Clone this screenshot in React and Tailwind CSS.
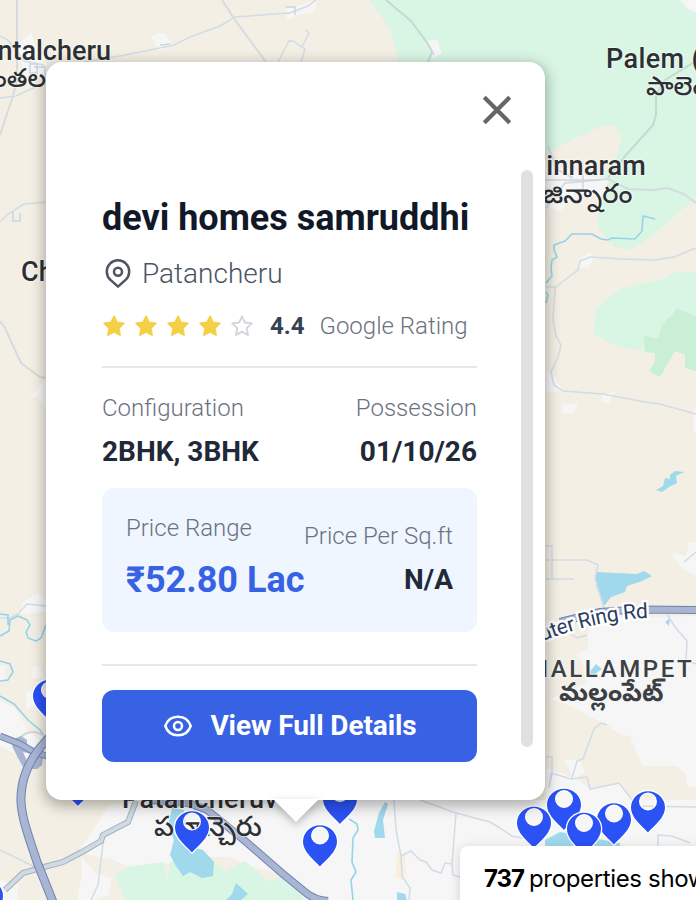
import React from "react";

const pins = [
  [50, 721], [78, 806], [340, 824], [564, 830], [648, 832.5], [614, 844.5],
  [534, 848], [192, 852.5], [584, 854], [320, 866.5], [-14, 921], [708, 884],
];

function Pin({ x, y }) {
  return (
    <path
      transform={`translate(${x} ${y})`}
      d="M0 0C-4-5-17-14-17-25A17 16.2 0 0 1 17-25C17-14 4-5 0 0ZM0-40A9 9 0 1 0 0-22A9 9 0 1 0 0-40Z"
      fill="#2b52f5"
      fillRule="evenodd"
      stroke="#fff"
      strokeWidth="2.6"
      strokeLinejoin="round"
      paintOrder="stroke"
    />
  );
}

function Highway({ d, width = 7 }) {
  return (
    <g fill="none">
      <path d={d} stroke="#7182b0" strokeWidth={width + 1} />
      <path d={d} stroke="#a9b6d3" strokeWidth={width - 1} />
    </g>
  );
}

function MapCanvas() {
  return (
    <svg className="absolute inset-0 h-[900px] w-[696px]" viewBox="0 0 696 900">
      <rect width="696" height="900" fill="#f3efe4" />

      <g fill="#d9f6e4">
        <path d="M369 0L391 30L398 62L410 100L500 160L545 155L572 140L600 127L615 125L622 136L615 163L600 177L598 228L614 246L631 250L650 237L696 198V0Z" />
        <path d="M596 309L620 289L662 279L679 271L696 273V350L648 351L618 347L594 335Z" />
      </g>
      <path d="M644 336L659 339Q659 324 672 315L677 308L696 317V371L685 368V355L675 351L660 377L649 371L655 362V353L645 352Z" fill="#caefd7" />

      <g fill="#f6f6f6">
        <path d="M151 38L157 33L165 33L170 42L170 47L160 50Z" />
        <path d="M286 9L318 0L314 12L297 15L287 21Z" />
        <path d="M17 45L32 32L34 43L46 61L47 80L25 76Z" />
        <path d="M426 41L437 40L442 54L432 58Z" />
        <path d="M680 0H696V12L688 9Z" />
        <path d="M546 165L568 168L595 178L609 178L604 195L573 198L560 212L546 205Z" />
        <path d="M579 261L589 252L593 255V260L588 268H579Z" />
        <path d="M546 372H552L563 391L546 393Z" />
        <path d="M602 395L616 391L608 404L602 402ZM563 405L578 403L574 413L563 413Z" />
        <path d="M30 397L46 379V408L37 397ZM22 603L38 593L46 600V612L20 614Z" />
        <path d="M671 553L686 556L689 542H696V576L682 568Z" />
        <path d="M694 410L696 409V436L693 428Z" />
        <path d="M577 655L588 648L588 622L600 618L696 616V788L687 786L676 765L643 766L638 756L630 735L620 738L608 725L600 722L575 708L551 699L565 692L586 684L582 661Z" />
        <path d="M0 700L15 708L28 730L46 746V758L22 757L0 746ZM33 667L38 666L44 675L44 678L32 678ZM26 693L34 690V706L26 709ZM0 666H6L4 680L0 681Z" />
        <path d="M108 806L136 800H696V900H300L284 875L250 866L230 857L210 857L166 864L160 862L128 867L114 860L96 856L78 852L90 835Z" />
        <path d="M81 856L96 874L112 878L108 896L92 900H77L82 875ZM0 880L18 885L17 900H0Z" />
        <path d="M565 760L585 760L584 777L575 780L569 771Z" />
        <path d="M546 766L573 778L625 783L636 798L696 808V900H546Z" />
      </g>
      <path d="M546 722L551 700L600 722L631 740L643 766L676 765L687 776L685 797L632 800L620 784L589 788L573 776L546 768Z" fill="#f3efe4" />
      <path d="M600 720L612 725L630 735L638 756L643 766H696V690H600Z" fill="#f6f6f6" />
      <path d="M565 760L580 760L585 772L574 780Z" fill="#f6f6f6" />
      <path d="M114 875L128 867L165 862L164 868L167 880L170 862L184 858L210 857L225 872L245 861L270 883L284 890L300 900H126L122 893Z" fill="#d9f6e4" />
      <path d="M284 900L240 866L244 861L252 867L269 882L280 877L300 890L304 900Z" fill="#d9f6e4" />

      <g fill="#a0d8ec">
        <path d="M656 490L663 486L665 478L670 479V475L675 471L684 472L676 476L677 483L669 487L662 492Z" />
        <path d="M596 572L637 574L644 571L652 576L642 581L627 586L625 592L611 597L604 606L596 586Z" />
        <path d="M596 664L602 669L595 674L588 674ZM665 622L670 618L669 626Z" />
        <path d="M172 808L184 810L188 846L203 850L214 862L213 876L202 878L190 872L183 876L176 866L170 855L174 840L168 826Z" />
        <path d="M385 802L388 804L383 820L385 838H375L374 831L379 813ZM397 892L405 894L407 900H397Z" />
        <path d="M545 840L560 832L620 843V850H545ZM236 883L248 894L241 900H226L232 894Z" />
      </g>
      <path d="M397 852L405 855L406 873L402 880L396 877Z" fill="#f8efdc" />

      <g fill="none" stroke="#d6dbe0" strokeWidth="2">
        <path d="M17 0V80L13 96L0 135M222 0L235 20L266 62M0 321L5 328L21 363L40 377L46 378" />
        <path d="M386 0L411 21L428 44L432 52L428 62M696 61L665 80L656 95V115L653 125L626 155L608 178" stroke="#c3dad2" />
        <path d="M548 146L558 170L573 178M546 208L565 183L608 179L628 189L654 190L668 188L684 194L696 203" />
      </g>
      <g fill="none" stroke="#d2dce6" strokeWidth="1.5">
        <path d="M84 62L120 56L150 50L174 45L190 37L220 26L235 17L288 13M278 62L289 41L293 41L305 49L301 62M302 47L309 33L305 30M287 14L308 6L316 0M0 98L16 96L40 85M0 36L8 40L24 61L44 65M0 222L8 214L24 204L46 202" />
        <path d="M546 287L556 287L562 282L578 270L580 261L590 257L620 259L655 260L674 257L696 248M555 288L553 320L556 336L561 345L558 357L551 372L554 385L563 391L603 394L645 402L660 404L696 414" />
        <path d="M546 546H552V578M546 560L587 560L598 565L595 578L604 608M546 579H574M571 634L577 638L587 635M667 614L675 627L687 641L686 660L696 664M684 562L696 552M572 778L577 761L583 759L594 729L601 723L607 725M546 757H552V774L549 788L551 773L571 779L587 777L590 789L619 783L630 797L636 806L696 807" />
        <path d="M394 800L396 830L401 856L402 876L410 888L409 900M420 800L456 813L490 822L500 828M401 856L411 851L420 860L426 862L432 870L441 873L445 863L452 864L456 813M452 864L453 875L460 877M500 828L512 836L522 838M658 848V835L672 836L690 843" />
        <path d="M0 850L35 867M104 835L100 868L98 885L91 900M0 618L10 618L18 614L27 604L46 606" />
      </g>
      <g fill="none" stroke="#c9d6e0" strokeWidth="1.5">
        <path d="M30 64V73H37V64ZM34 67H45V78M13 212V221H20V213M286 7H295V15M160 45L170 44M430 48L434 55M545 180L600 180M583 174V190" />
      </g>
      <g fill="none" stroke="#96d3ea" strokeWidth="1.6">
        <path d="M655 219L643 216L642 231L635 239L612 238L608 240L601 239L592 234L572 234L565 241L554 245V250L557 257L552 260L551 268L552 276L546 283M546 292L548 295L546 303" />
        <path d="M0 614L8 615V625M0 636L9 631L10 620L18 616L27 620L30 625L26 632L28 638L36 641L41 638L46 625M0 661L10 664L13 672L8 680L0 681M0 696L14 704L28 720L40 730L46 739M349 819L357 824L358 830L353 838L352 862L356 872L351 880L353 900" />
      </g>

      <g fill="none">
        <path d="M5 890L23 873L44 867L63 862L82 852L101 841L103 835L128 822L136 801" stroke="#a5b3bf" strokeWidth="6" />
        <path d="M5 890L23 873L44 867L63 862L82 852L101 841L103 835L128 822L136 801" stroke="#cfdae2" strokeWidth="4" />
        <path d="M19 740Q24 731 35 732L46 736" stroke="#d3d6d8" strokeWidth="2" />
      </g>
      <path d="M16 738L21 736L27 740V746L34 752L43 757L42 765L37 769H24L18 758L12 746ZM23 752L27 761L32 754Z" fill="#a9b6d3" fillRule="evenodd" />
      <Highway d="M0 736L20 744L34 752L50 757" width={6} />
      <Highway d="M54 733C33 752 22 773 21 796C20 815 29 837 37 862L53 902" width={8} />
      <Highway d="M150 800L188 803L207 810L217 818L245 841L283 874L305 892Q314 900 328 901" width={7} />
      <Highway d="M560 622L600 612L640 609.5L696 610" width={7} />

      <g fontFamily="Roboto, 'Noto Sans Telugu', sans-serif" fontWeight="500" fontSize="27" fill="#2d3034" stroke="#ffffff" strokeOpacity="0.5" strokeWidth="2" paintOrder="stroke">
        <text x="111" y="60" textAnchor="end">Inntalcheru</text>
        <text x="46" y="87" textAnchor="end" fontSize="25.5">ఇంతల</text>
        <text x="606" y="68" letterSpacing="0.4">Palem (</text>
        <text x="646" y="95" fontSize="26">పాలెం</text>
        <text x="646" y="175" textAnchor="end" letterSpacing="0.15">Jinnaram</text>
        <text x="543" y="203" fontSize="27">జిన్నారం</text>
        <text x="21" y="280.5">Ch</text>
        <text x="122" y="808" letterSpacing="0.4">Patancheruv</text>
        <text x="154" y="836" fontSize="27.5">పటాన్చెరు</text>
      </g>
      <g fontFamily="Roboto, 'Noto Sans Telugu', sans-serif" fill="#3c4043" stroke="#f6f6f6" strokeWidth="2" paintOrder="stroke" fontWeight="500">
        <text x="527" y="677" fontSize="24" letterSpacing="2.6">MALLAMPET</text>
        <text x="559" y="701" fontSize="25.8" fontWeight="700">మల్లంపేట్</text>
      </g>
      <path id="ring-road-label" d="M510 654C540 641 596 619 647.5 618" fill="none" />
      <text fontFamily="Roboto, sans-serif" fontSize="21" letterSpacing="-0.45" fill="#2b3c60" stroke="#fff" strokeWidth="5" strokeLinejoin="round" paintOrder="stroke" textAnchor="end">
        <textPath href="#ring-road-label" startOffset="100%">Outer Ring Rd</textPath>
      </text>
      {pins.map(([x, y]) => <Pin key={`${x}-${y}`} x={x} y={y} />)}
    </svg>
  );
}

function Star({ filled }) {
  return (
    <svg viewBox="0 0 24 24" className="size-6" fill={filled ? "#f5cf45" : "none"} stroke={filled ? "#f5cf45" : "#d1d5db"} strokeWidth="1.8" strokeLinejoin="round">
      <path d="M12 2.4L14.8 8.5L21.8 9.4L16.7 14.1L18 21L12 17.6L6 21L7.3 14.1L2.2 9.4L9.2 8.5Z" />
    </svg>
  );
}

function Field({ label, value, right }) {
  return (
    <div className={right ? "text-right" : ""}>
      <div className="text-2xl leading-8 font-light text-[#6b7280]">{label}</div>
      <div className="mt-2 text-[28px] leading-10 font-bold text-[#1f2937]">{value}</div>
    </div>
  );
}

function PropertyCard() {
  return (
    <section className="absolute top-[62px] left-[46px] flex h-[738px] w-[499px] flex-col rounded-2xl bg-white font-[Roboto,sans-serif] shadow-[0_4px_14px_2px_rgba(0,0,0,0.3)]">
      <header className="flex h-[108px] justify-end pt-[33px] pr-[33px]">
        <button aria-label="Close" className="size-[30px]">
          <svg viewBox="0 0 30 30" stroke="#666" strokeWidth="4.2" fill="none"><path d="M2.3 2.3L27.7 27.7M27.7 2.3L2.3 27.7" /></svg>
        </button>
      </header>
      <div className="flex pr-3">
        <div className="w-[431px] pt-5 pl-14">
          <h1 className="text-4xl leading-[56px] font-bold whitespace-nowrap text-[#111827]">devi homes samruddhi</h1>
          <div className="mt-2 flex h-10 items-center gap-2 text-[28px] font-light text-[#4b5563]">
            <svg viewBox="0 0 32 32" className="size-8" fill="none" stroke="currentColor" strokeWidth="2.5" strokeLinejoin="round">
              <path d="M16 28.7L8.2 21.6A11.2 11.2 0 1 1 23.8 21.6Z" />
              <circle cx="16" cy="13.7" r="4" />
            </svg>
            Patancheru
          </div>
          <div className="mt-4 flex h-8 items-center gap-2 text-2xl">
            {[1, 2, 3, 4, 5].map((n) => <Star key={n} filled={n < 5} />)}
            <span className="ml-2 font-bold text-[#374151]">4.4</span>
            <span className="ml-[7px] font-light whitespace-nowrap text-[#6b7280]">Google Rating</span>
          </div>
          <div className="mt-6 flex justify-between border-t-2 border-[#e5e7eb] pt-6">
            <Field label="Configuration" value="2BHK, 3BHK" />
            <Field label="Possession" value="01/10/26" right />
          </div>
          <div className="mt-4 flex items-center justify-between rounded-xl bg-[#eff6ff] p-6 whitespace-nowrap">
            <div className="w-[170px]">
              <div className="text-2xl leading-8 font-light text-[#6b7280]">Price Range</div>
              <div className="mt-2 text-4xl leading-[56px] font-bold text-[#3762e3]">₹52.80 Lac</div>
            </div>
            <Field label="Price Per Sq.ft" value="N/A" right />
          </div>
          <div className="mt-8 border-t-2 border-[#e5e7eb] pt-6">
            <button className="flex h-[72px] w-full items-center justify-center gap-4 rounded-xl bg-[#3762e3] text-[28px] font-bold tracking-[-0.1px] text-white">
              <svg viewBox="0 0 32 32" className="size-8" fill="none" stroke="currentColor" strokeWidth="2.5">
                <path d="M3.3 16C5.4 9.8 10.2 6.7 16 6.7S26.6 9.8 28.7 16C26.6 22.2 21.8 25.3 16 25.3S5.4 22.2 3.3 16Z" />
                <circle cx="16" cy="16" r="4" />
              </svg>
              View Full Details
            </button>
          </div>
        </div>
        <div className="ml-11 h-[577px] w-3 rounded-full bg-[#e0e0e0]" />
      </div>
      <svg className="absolute top-[737px] left-[227px] h-[23px] w-[46px] drop-shadow-[0_3px_4px_rgba(0,0,0,0.25)]" viewBox="0 0 46 23">
        <path d="M0 0H46L23 23Z" fill="#fff" />
      </svg>
    </section>
  );
}

export default function App() {
  return (
    <main className="relative h-[900px] w-[696px] overflow-hidden">
      <MapCanvas />
      <PropertyCard />
      <div className="absolute top-[846px] left-[460px] flex h-[66px] w-[300px] items-center gap-[5px] rounded-lg bg-white pl-6 font-[Inter,sans-serif] text-[24px] whitespace-nowrap text-black shadow-[0_2px_12px_rgba(0,0,0,0.15)]">
        <b className="tracking-[-1px]">737</b>
        <span className="tracking-[-0.35px]">properties shown</span>
      </div>
    </main>
  );
}
